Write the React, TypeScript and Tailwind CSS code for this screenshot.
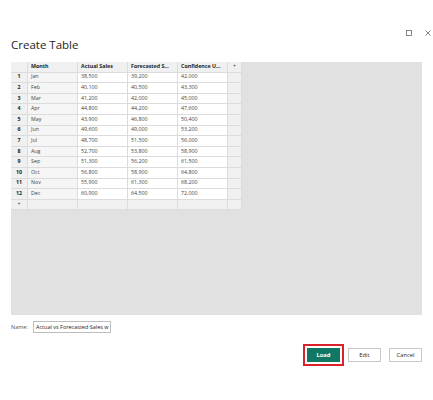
import React from 'react';

const rows: [string, string, string, string][] = [
  ['Jan', '38,500', '39,200', '42,000'],
  ['Feb', '40,100', '40,500', '43,300'],
  ['Mar', '41,200', '42,000', '45,000'],
  ['Apr', '44,800', '44,200', '47,600'],
  ['May', '43,900', '46,800', '50,400'],
  ['Jun', '49,600', '49,000', '53,200'],
  ['Jul', '48,700', '51,500', '56,000'],
  ['Aug', '52,700', '53,800', '58,900'],
  ['Sep', '51,300', '56,200', '61,500'],
  ['Oct', '56,800', '58,900', '64,800'],
  ['Nov', '55,900', '61,300', '68,200'],
  ['Dec', '60,900', '64,500', '72,000'],
];

const cell = 'h-[10.6px] border-r border-b border-[#dcdcdc] px-[3px] flex items-center overflow-hidden whitespace-nowrap';

export default function App() {
  return (
    <div className="w-[433px] h-[400px] bg-white flex flex-col font-['Open_Sans',sans-serif] text-[#252423]">
      {/* window controls */}
      <div className="flex justify-end items-center gap-[13px] pt-[30px] pr-[2px] h-[36px]">
        <svg width="6" height="6" viewBox="0 0 6 6">
          <rect x="0.5" y="0.5" width="5" height="5" fill="none" stroke="#666" strokeWidth="0.8" />
        </svg>
        <svg width="6" height="6" viewBox="0 0 6 6">
          <path d="M0.5 0.5 L5.5 5.5 M5.5 0.5 L0.5 5.5" stroke="#666" strokeWidth="0.8" />
        </svg>
      </div>

      <h1 className="ml-[11px] mt-[1px] text-[11.5px] leading-[16px] font-medium">Create Table</h1>

      {/* data area */}
      <div className="mx-[11px] mt-[9px] h-[253px] bg-[#e1e1e1]">
        <div className="grid grid-cols-[17px_50px_50px_50px_50px_14px] w-[231px] bg-white text-[5.3px] text-[#444]">
          <div className={`${cell} bg-[#f0f0f0]`} />
          <div className={`${cell} bg-[#f0f0f0] font-bold text-[#252423]`}>Month</div>
          <div className={`${cell} bg-[#f0f0f0] font-bold text-[#252423]`}>Actual Sales</div>
          <div className={`${cell} bg-[#f0f0f0] font-bold text-[#252423]`}>Forecasted S...</div>
          <div className={`${cell} bg-[#f0f0f0] font-bold text-[#252423]`}>Confidence U...</div>
          <div className={`${cell} bg-[#f0f0f0] justify-center`}>+</div>
          {rows.map((r, i) => (
            <React.Fragment key={r[0]}>
              <div className={`${cell} bg-[#f0f0f0] justify-center font-bold text-[#252423]`}>{i + 1}</div>
              <div className={`${cell} bg-[#f5f5f5]`}>{r[0]}</div>
              <div className={cell}>{r[1]}</div>
              <div className={cell}>{r[2]}</div>
              <div className={cell}>{r[3]}</div>
              <div className={`${cell} bg-[#f0f0f0]`} />
            </React.Fragment>
          ))}
          <div className={`${cell} bg-[#f0f0f0] justify-center`}>+</div>
          <div className={`${cell} bg-[#f0f0f0]`} />
          <div className={`${cell} bg-[#f0f0f0]`} />
          <div className={`${cell} bg-[#f0f0f0]`} />
          <div className={`${cell} bg-[#f0f0f0]`} />
          <div className={`${cell} bg-[#f0f0f0]`} />
        </div>
      </div>

      {/* name */}
      <div className="flex items-center ml-[11px] mt-[6px] h-[12px]">
        <span className="text-[5.5px] text-[#555] w-[22px]">Name:</span>
        <div className="w-[78px] h-[12px] border border-[#bdbdbd] px-[2px] flex items-center overflow-hidden whitespace-nowrap text-[5.5px] text-[#252423]">
          Actual vs Forecasted Sales w
        </div>
      </div>

      {/* actions */}
      <div className="flex justify-end items-center mr-[11px] mt-[11px]">
        <div className="border-2 border-[#d9222a] p-[2px] flex">
          <button type="button" className="w-[33px] h-[14px] bg-[#117865] text-white text-[5.8px] font-bold flex items-center justify-center">
            Load
          </button>
        </div>
        <button type="button" className="ml-[4px] w-[33px] h-[14px] border border-[#c8c8c8] bg-white text-[5.8px] text-[#252423] flex items-center justify-center">
          Edit
        </button>
        <button type="button" className="ml-[8px] w-[33px] h-[14px] border border-[#c8c8c8] bg-white text-[5.8px] text-[#252423] flex items-center justify-center">
          Cancel
        </button>
      </div>
    </div>
  );
}
